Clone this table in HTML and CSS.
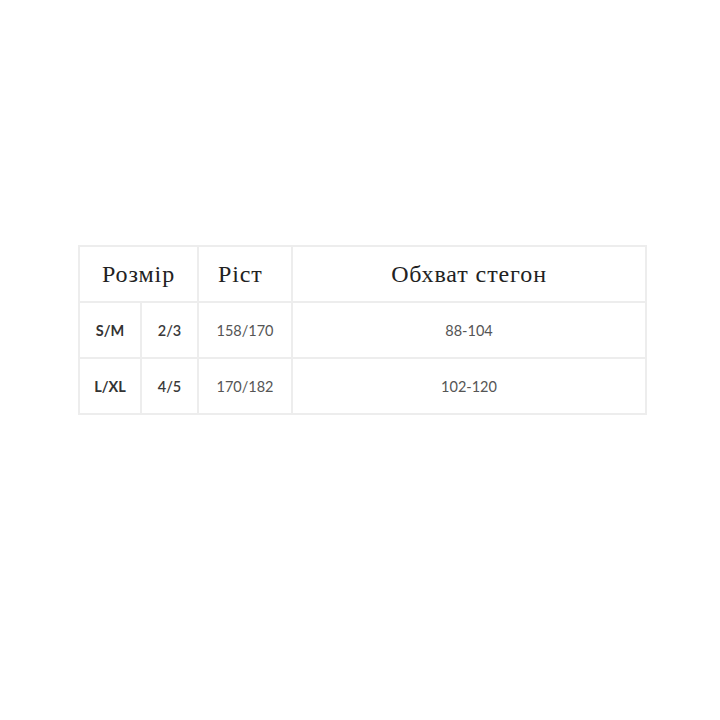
FILE: index.html
```html
<!DOCTYPE html>
<html lang="uk">
<head>
<meta charset="utf-8">
<title>Розмірна сітка</title>
<link rel="stylesheet" href="styles.css">
</head>
<body>
<div class="page">
  <table class="sizes">
    <colgroup>
      <col class="c1"><col class="c2"><col class="c3"><col class="c4">
    </colgroup>
    <thead>
      <tr>
        <th colspan="2" class="h-center">Розмір</th>
        <th class="h-left">Ріст</th>
        <th class="h-center">Обхват стегон</th>
      </tr>
    </thead>
    <tbody>
      <tr>
        <td class="size">S/M</td>
        <td class="num-bold">2/3</td>
        <td>158/170</td>
        <td>88-104</td>
      </tr>
      <tr>
        <td class="size">L/XL</td>
        <td class="num-bold">4/5</td>
        <td>170/182</td>
        <td>102-120</td>
      </tr>
    </tbody>
  </table>
</div>
</body>
</html>
```
FILE: styles.css
```css
html, body {
  margin: 0;
  padding: 0;
  background: #ffffff;
}
.page {
  padding: 245px 0 0 78px;
}
.sizes {
  border-collapse: collapse;
  table-layout: fixed;
  width: 567px;
}
.c1 { width: 62px; }
.c2 { width: 57px; }
.c3 { width: 94px; }
.c4 { width: 354px; }
.sizes th,
.sizes td {
  border: 2px solid #ededed;
  height: 54px;
  padding: 0;
  text-align: center;
  vertical-align: middle;
}
.sizes th {
  font-family: "Liberation Serif", "Times New Roman", serif;
  font-weight: normal;
  font-size: 24px;
  letter-spacing: 0.9px;
  color: #222222;
}
.sizes th.h-left {
  text-align: left;
  padding-left: 19px;
}
.sizes td {
  font-family: Lato, "Liberation Sans", sans-serif;
  font-size: 14.5px;
  color: #555555;
}
.sizes td.size {
  font-weight: 700;
  color: #333333;
}
.sizes td.num-bold {
  font-weight: 600;
  color: #3a3a3a;
}
```
